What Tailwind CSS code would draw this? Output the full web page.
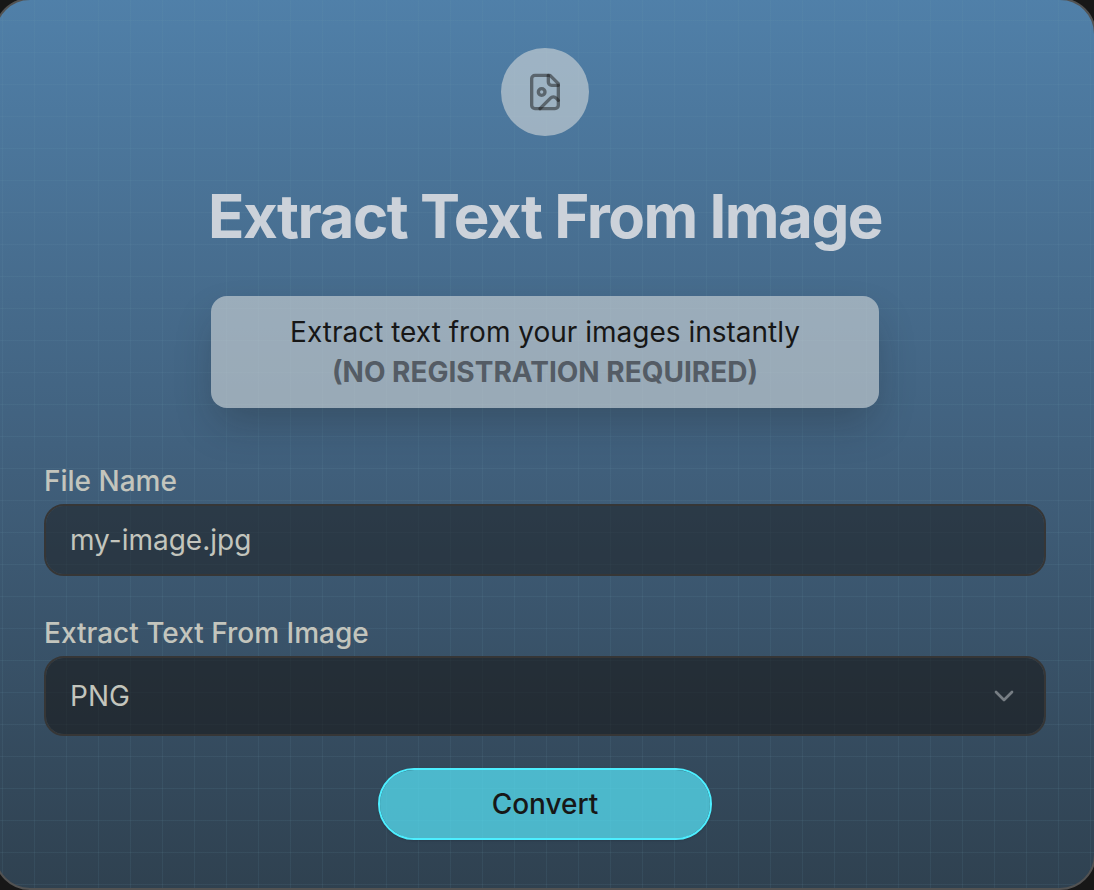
<!DOCTYPE html>
<html lang="en">
<head>
    <meta charset="UTF-8">
    <meta name="viewport" content="width=device-width, initial-scale=1.0">
    <title>Extract Text From Image</title>
    <script src="https://cdn.jsdelivr.net/npm/@tailwindcss/browser@4"></script>
</head>
<body class="bg-[#171717] font-['Inter',sans-serif] text-[28px] overflow-hidden">

    <!-- Converter card, bleeds slightly past the viewport -->
    <main class="relative -ml-1.5 -mr-0.5 -mt-0.5 p-12 flex flex-col items-center rounded-[36px] border-2 border-[#525252] bg-linear-to-b from-[#5080a9] via-[#41617e] to-[#2f4150] bg-origin-border">

        <!-- Grid lines -->
        <div class="absolute inset-0 rounded-[34px] pointer-events-none bg-[linear-gradient(to_right,rgba(110,160,180,0.11)_1px,transparent_1px),linear-gradient(to_bottom,rgba(110,160,180,0.11)_1px,transparent_1px)] bg-size-[32px_32px] bg-position-[6px_20px]"></div>

        <div class="relative size-22 rounded-full bg-[#d4d8db]/60 flex items-center justify-center">
            <!-- Lucide: file-image -->
            <svg xmlns="http://www.w3.org/2000/svg" fill="none" viewBox="0 0 24 24" stroke-width="2" stroke="currentColor" stroke-linecap="round" stroke-linejoin="round" class="size-10 text-[#171717]/50">
                <path d="M15 2H6a2 2 0 0 0-2 2v16a2 2 0 0 0 2 2h12a2 2 0 0 0 2-2V7Z" />
                <path d="M14 2v4a2 2 0 0 0 2 2h4" />
                <circle cx="10" cy="12" r="2" />
                <path d="m20 17-1.296-1.296a2.41 2.41 0 0 0-3.408 0L9 22" />
            </svg>
        </div>

        <h1 class="relative mt-12 text-[60px] leading-16 font-bold tracking-tight text-center text-[#ccd2da]">Extract Text From Image</h1>

        <p class="relative mt-12 w-2/3 p-4 rounded-2xl bg-[#d4d8db]/60 text-center leading-10 text-[#171717] shadow-[0_20px_40px_-6px_rgba(23,23,23,0.25)]">
            Extract text from your images instantly
            <strong class="block font-bold text-[#545c65]">(NO REGISTRATION REQUIRED)</strong>
        </p>

        <form class="relative mt-[58px] w-full flex flex-col items-center">
            <div class="w-full">
                <label for="fileName" class="block mb-2 leading-[30px] font-medium text-[#c3c5bd]">File Name</label>
                <input type="text" id="fileName" value="my-image.jpg" class="block w-full h-18 px-6 rounded-[20px] border-2 border-[#363636] bg-[#171717]/50 bg-clip-padding text-[#c3c5bd] focus:outline-none focus:ring-2 focus:ring-cyan-300">
            </div>

            <div class="mt-[42px] w-full">
                <label for="imageFormat" class="block mb-2 leading-[30px] font-medium text-[#c3c5bd]">Extract Text From Image</label>
                <div class="relative">
                    <select id="imageFormat" class="block w-full h-20 px-6 appearance-none rounded-[20px] border-2 border-[#363636] bg-[#171717]/60 bg-clip-padding text-[#c3c5bd] focus:outline-none focus:ring-2 focus:ring-cyan-300">
                        <option selected>PNG</option>
                        <option>JPG</option>
                        <option>WEBP</option>
                    </select>
                    <!-- Lucide: chevron-down -->
                    <svg xmlns="http://www.w3.org/2000/svg" fill="none" viewBox="0 0 24 24" stroke-width="2" stroke="currentColor" stroke-linecap="round" stroke-linejoin="round" class="absolute right-[26px] top-6 size-8 pointer-events-none text-[#777e84]">
                        <path d="m6 9 6 6 6-6" />
                    </svg>
                </div>
            </div>

            <button type="button" class="mt-8 w-1/3 h-18 rounded-full border-2 border-[#4deeff] bg-[#56ddf2]/75 bg-clip-padding font-medium text-[#171717] shadow-sm hover:bg-[#56ddf2]">Convert</button>
        </form>
    </main>

</body>
</html>
